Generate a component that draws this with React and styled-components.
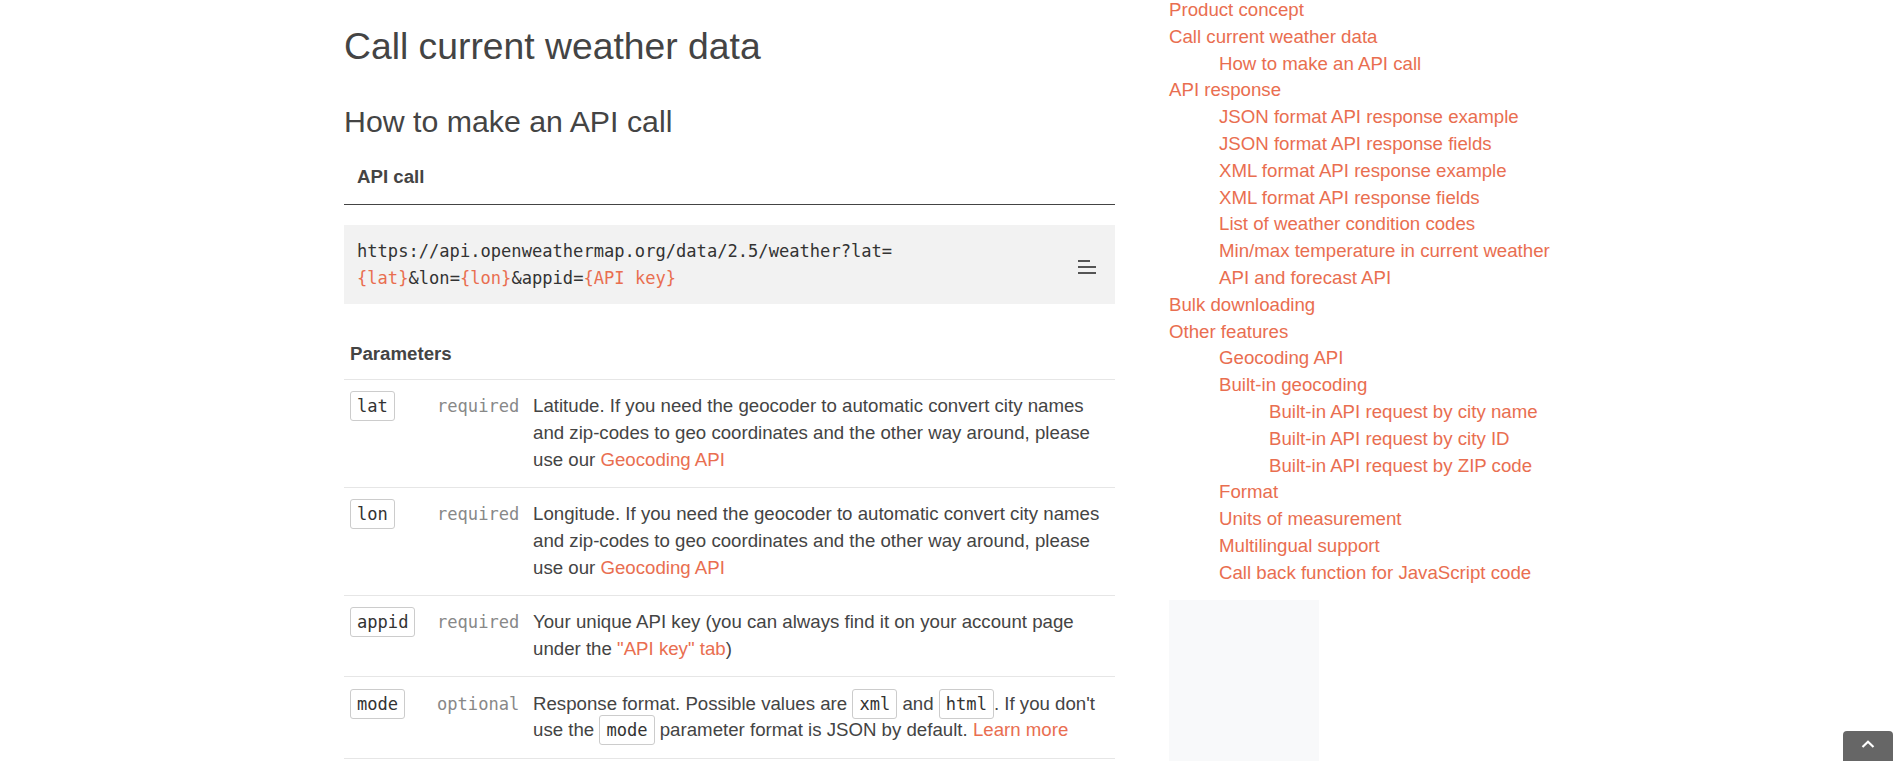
import React from 'react';
import styled, { createGlobalStyle } from 'styled-components';

const GlobalStyle = createGlobalStyle`
  html, body {
    margin: 0;
    padding: 0;
    overflow: hidden;
    background: #fff;
  }
  body {
    font-family: "Liberation Sans", Arial, sans-serif;
    font-size: 18.67px;
    line-height: 26.67px;
    color: #444;
  }
`;

const ORANGE = '#e96e50';

const Container = styled.div`
  width: 1210px;
  margin: 0 auto;
  display: flex;
  align-items: flex-start;
  gap: 54px;
`;

const Main = styled.main`
  width: 771px;
  flex-shrink: 0;
`;

const Title = styled.h1`
  margin: 25.5px 0 0;
  font-size: 37.3px;
  line-height: 1.1;
  font-weight: 400;
  color: #444;
`;

const Subtitle = styled.h2`
  margin: 38px 0 0;
  font-size: 30.3px;
  line-height: 1.1;
  font-weight: 400;
  color: #444;
`;

const TabHeader = styled.div`
  margin-top: 26px;
  padding: 0 13px 13.6px;
  font-weight: 700;
  border-bottom: 1px solid #444;
`;

const CodeBox = styled.div`
  margin-top: 19.5px;
  background: #f2f2f2;
  padding: 13.5px 18px 12.5px 13px;
  display: flex;
  align-items: center;
  justify-content: space-between;
`;

const Code = styled.pre`
  margin: 0;
  font-family: "DejaVu Sans Mono", "Liberation Mono", monospace;
  font-size: 17.1px;
  line-height: 26.67px;
  color: #333;
  white-space: pre;
`;

const Placeholder = styled.span`
  color: ${ORANGE};
`;

const MenuIcon = styled.svg`
  margin-top: 4px;
  flex-shrink: 0;
`;

const ParamTitle = styled.div`
  margin-top: 36.6px;
  padding: 0 6px 11.7px;
  font-weight: 700;
  border-bottom: 1px solid #e6e6e6;
`;

const Table = styled.table`
  width: 100%;
  border-collapse: collapse;
  table-layout: fixed;
`;

const Row = styled.tr`
  border-bottom: 1px solid #e6e6e6;
`;

const Cell = styled.td`
  padding: 13.5px 6px;
  vertical-align: top;
  width: ${p => (p.$w ? `${p.$w}px` : 'auto')};
  box-sizing: border-box;
`;

const Chip = styled.code`
  font-family: "DejaVu Sans Mono", "Liberation Mono", monospace;
  font-size: 17.1px;
  line-height: 1;
  color: #333;
  background: #fff;
  border: 1px solid #ccc;
  border-radius: 3px;
  padding: 4px 6px;
`;

const Requirement = styled.span`
  font-family: "DejaVu Sans Mono", "Liberation Mono", monospace;
  font-size: 17.1px;
  color: #888;
`;

const Link = styled.a`
  color: ${ORANGE};
  text-decoration: none;
`;

const Sidebar = styled.aside`
  flex: 1;
  margin-top: -3px;
`;

const NavList = styled.ul`
  list-style: none;
  margin: 0;
  padding: 0;
`;

const NavItem = styled.li`
  padding-left: ${p => p.$level * 50}px;
  line-height: 26.8px;
  color: ${ORANGE};
  white-space: nowrap;
`;

const AdBox = styled.div`
  margin-top: 13px;
  width: 150px;
  height: 200px;
  background: #f8f9fa;
`;

const ScrollTop = styled.button`
  position: fixed;
  right: 5px;
  bottom: -10px;
  width: 50px;
  height: 40px;
  border: none;
  border-radius: 4px;
  background: #666;
  padding: 9px 0 0;
  display: flex;
  justify-content: center;
  align-items: flex-start;
`;

const nav = [
  ['Product concept', 0],
  ['Call current weather data', 0],
  ['How to make an API call', 1],
  ['API response', 0],
  ['JSON format API response example', 1],
  ['JSON format API response fields', 1],
  ['XML format API response example', 1],
  ['XML format API response fields', 1],
  ['List of weather condition codes', 1],
  ['Min/max temperature in current weather', 1],
  ['API and forecast API', 1],
  ['Bulk downloading', 0],
  ['Other features', 0],
  ['Geocoding API', 1],
  ['Built-in geocoding', 1],
  ['Built-in API request by city name', 2],
  ['Built-in API request by city ID', 2],
  ['Built-in API request by ZIP code', 2],
  ['Format', 1],
  ['Units of measurement', 1],
  ['Multilingual support', 1],
  ['Call back function for JavaScript code', 1],
];

const geoText = 'If you need the geocoder to automatic convert city names and zip-codes to geo coordinates and the other way around, please use our ';

const params = [
  {
    name: 'lat',
    req: 'required',
    desc: <>Latitude. {geoText}<Link href="#">Geocoding API</Link></>,
  },
  {
    name: 'lon',
    req: 'required',
    desc: <>Longitude. {geoText}<Link href="#">Geocoding API</Link></>,
  },
  {
    name: 'appid',
    req: 'required',
    desc: <>Your unique API key (you can always find it on your account page under the <Link href="#">"API key" tab</Link>)</>,
  },
  {
    name: 'mode',
    req: 'optional',
    desc: (
      <>
        Response format. Possible values are <Chip>xml</Chip> and <Chip>html</Chip>. If you don't use the <Chip>mode</Chip> parameter format is JSON by default. <Link href="#">Learn more</Link>
      </>
    ),
  },
];

export default function App() {
  return (
    <>
      <GlobalStyle />
      <Container>
        <Main>
          <Title>Call current weather data</Title>
          <Subtitle>How to make an API call</Subtitle>
          <TabHeader>API call</TabHeader>
          <CodeBox>
            <Code>
              {'https://api.openweathermap.org/data/2.5/weather?lat=\n'}
              <Placeholder>{'{lat}'}</Placeholder>&amp;lon=<Placeholder>{'{lon}'}</Placeholder>&amp;appid=<Placeholder>{'{API key}'}</Placeholder>
            </Code>
            <MenuIcon width="19" height="14" viewBox="0 0 19 14">
              <rect x="0" y="0" width="12" height="2" fill="#555" />
              <rect x="0" y="6" width="18" height="2" fill="#555" />
              <rect x="0" y="12" width="18" height="2" fill="#555" />
            </MenuIcon>
          </CodeBox>
          <ParamTitle>Parameters</ParamTitle>
          <Table>
            <tbody>
              {params.map(p => (
                <Row key={p.name}>
                  <Cell $w={87}><Chip>{p.name}</Chip></Cell>
                  <Cell $w={96}><Requirement>{p.req}</Requirement></Cell>
                  <Cell>{p.desc}</Cell>
                </Row>
              ))}
            </tbody>
          </Table>
        </Main>
        <Sidebar>
          <NavList>
            {nav.map(([label, level]) => (
              <NavItem key={label} $level={level}>{label}</NavItem>
            ))}
          </NavList>
          <AdBox />
        </Sidebar>
      </Container>
      <ScrollTop aria-label="Scroll to top">
        <svg width="14" height="8" viewBox="0 0 14 8">
          <path d="M1.5 7 L7 1.8 L12.5 7" fill="none" stroke="#fff" strokeWidth="2.2" />
        </svg>
      </ScrollTop>
    </>
  );
}
